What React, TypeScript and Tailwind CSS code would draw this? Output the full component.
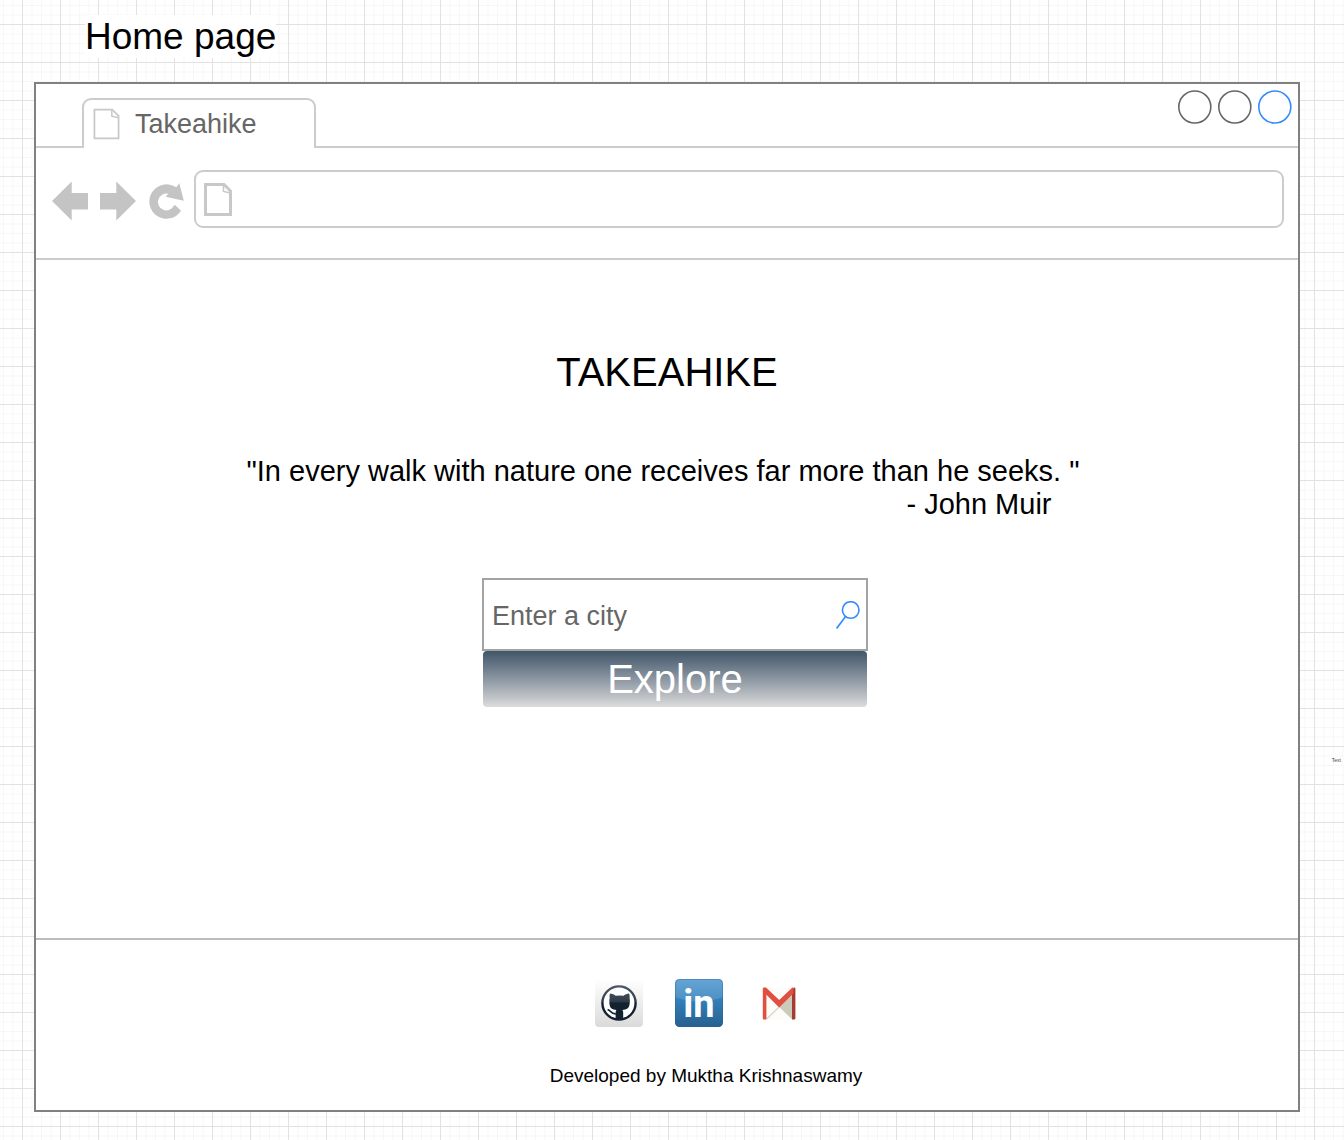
import React from "react";

function DocIcon({ className, weight }: { className: string; weight: number }) {
  return (
    <svg className={className} viewBox="0 0 28 33" fill="none" stroke="#c8c8c8" strokeWidth={weight} aria-hidden="true">
      <path d="M1.5 1.5H20L26.5 8V31.5H1.5Z" />
      <path d="M19.5 1.5V8.5L26.5 10" strokeWidth="1.5" />
    </svg>
  );
}

function WindowButton({ label, color }: { label: string; color: string }) {
  return (
    <button type="button" aria-label={label} className="size-[34px]">
      <svg viewBox="0 0 34 34" className="size-full" fill="none" stroke={color} strokeWidth="1.6">
        <circle cx="16.8" cy="17" r="16" />
      </svg>
    </button>
  );
}

function BackIcon() {
  return (
    <svg className="h-10 w-9" viewBox="0 0 36 40" fill="#c4c4c4" aria-hidden="true">
      <path d="M0 20L19.7 0.5V12H36V28.5H19.7V39.5Z" />
    </svg>
  );
}

function ForwardIcon() {
  return (
    <svg className="h-10 w-9" viewBox="0 0 36 40" fill="#c4c4c4" aria-hidden="true">
      <path d="M36 20L16.3 0.5V12H0V28.5H16.3V39.5Z" />
    </svg>
  );
}

function ReloadIcon() {
  return (
    <svg className="h-10 w-9" viewBox="0 0 36 40" fill="#c4c4c4" aria-hidden="true">
      <path d="M28.2 6.3L31.3 2.3L35.8 19.7L17.7 15.7L20.3 12.8A8.4 8.4 0 1 0 26 24.6L27 24L33 29.8A17.2 17.2 0 1 1 28.2 6.3Z" />
    </svg>
  );
}

function SearchIcon() {
  return (
    <svg className="mt-px h-7 w-6" viewBox="0 0 24 28" fill="none" stroke="#338cff" strokeWidth="1.6" aria-hidden="true">
      <circle cx="14.7" cy="9" r="8.3" />
      <path d="M9.6 15.6L0.6 27.4" />
    </svg>
  );
}

function GithubLogo() {
  return (
    <svg className="size-12" viewBox="0 0 48 48" aria-hidden="true">
      <defs>
        <linearGradient id="ghTile" x1="0" y1="0" x2="0" y2="1">
          <stop offset="0" stopColor="#ffffff" />
          <stop offset="1" stopColor="#dadada" />
        </linearGradient>
        <linearGradient id="ghInk" x1="0" y1="0" x2="0" y2="48" gradientUnits="userSpaceOnUse">
          <stop offset="0.15" stopColor="#4a5763" />
          <stop offset="0.47" stopColor="#2f3c49" />
          <stop offset="0.5" stopColor="#142230" />
          <stop offset="1" stopColor="#142230" />
        </linearGradient>
      </defs>
      <rect width="48" height="48" rx="4" fill="url(#ghTile)" />
      <circle cx="24" cy="24" r="16.6" fill="#fff" stroke="url(#ghInk)" strokeWidth="2.4" />
      <path
        fill="url(#ghInk)"
        d="M15.1 14.6C17.2 14.6 19 15.6 20.6 16.8Q24.5 16.1 28.6 16.8C30.2 15.6 32 14.6 34.1 14.6Q35 17.2 34.5 19C35 20.6 35 22.4 34.6 25C34 29.4 31.9 30.6 27.4 31Q28.2 32 28.2 33.6V40H20.6V33.6Q20.6 32 21.4 31C17 30.6 15 29.4 14.5 25C14.2 22.4 14.2 20.6 14.7 19Q14.2 17.2 15.1 14.6Z"
      />
      <path d="M12.6 30.6C16 31 15.6 35.2 20.8 34.8" fill="none" stroke="#142230" strokeWidth="1.7" />
    </svg>
  );
}

function LinkedinLogo() {
  return (
    <svg className="size-12" viewBox="0 0 48 48" aria-hidden="true">
      <defs>
        <linearGradient id="liTile" x1="0" y1="0" x2="0" y2="1">
          <stop offset="0" stopColor="#4f98d0" />
          <stop offset="0.45" stopColor="#327fb9" />
          <stop offset="1" stopColor="#27608f" />
        </linearGradient>
        <clipPath id="liClip">
          <rect width="48" height="48" rx="4.5" />
        </clipPath>
      </defs>
      <g clipPath="url(#liClip)">
        <rect width="48" height="48" fill="url(#liTile)" />
        <path d="M0 0H48V18Q24 27 0 18Z" fill="#ffffff" fillOpacity="0.13" />
      </g>
      <rect x="0.5" y="0.5" width="47" height="47" rx="4" fill="none" stroke="#275f92" strokeOpacity="0.35" />
      <text x="24" y="38" textAnchor="middle" fill="#fff" fontFamily="Roboto, sans-serif" fontWeight="700" fontSize="38">
        in
      </text>
    </svg>
  );
}

function GmailLogo() {
  return (
    <svg className="size-12" viewBox="0 0 48 48" aria-hidden="true">
      <path d="M8 8.5H40V40.5H8Z" fill="#fdfcf8" />
      <path d="M24.2 28L37.2 15.5V40.5Z" fill="#cbcabb" />
      <path d="M11.5 40L24.2 28" stroke="#d5d4c8" strokeWidth="1.2" />
      <path d="M37 11V40.5H39.2Q40.4 40.5 40.4 39.4V9.6Q40.4 8.5 39.2 8.5Z" fill="#a33c31" />
      <path d="M9 8.5H11L24.2 21L37.4 8.5H38.4V14.4L24.2 28.6L11.4 15.8V40.5H9Q7.8 40.5 7.8 39.4V9.6Q7.8 8.5 9 8.5Z" fill="#e04f40" />
    </svg>
  );
}

export default function App() {
  return (
    <div className="relative min-h-screen bg-white bg-[linear-gradient(to_right,#e2e2e2_1px,transparent_1px),linear-gradient(to_bottom,#e2e2e2_1px,transparent_1px),linear-gradient(to_right,#f7f7f7_1px,transparent_1px),linear-gradient(to_bottom,#f7f7f7_1px,transparent_1px)] bg-[size:38px_38px,38px_38px,9.5px_9.5px,9.5px_9.5px] bg-[position:22px_24px] pb-7 pl-[34px] pr-11 pt-[15px] font-['Liberation_Sans',Arial,sans-serif] text-black">
      <h1 className="mb-6 ml-[51px] w-fit bg-white text-[37px] leading-[43px]">Home page</h1>

      <div className="border-2 border-[#808080] bg-white">
        <header>
          <div className="flex h-16 items-stretch">
            <div className="w-[46px] border-b-2 border-[#cccccc]" />
            <div className="mt-[14px] flex w-[234px] items-center rounded-t-[9px] border-2 border-b-0 border-[#cccccc] pl-[9px] text-[27px] text-[#666666]">
              <DocIcon className="h-8 w-[27px]" weight={1.8} />
              <span className="ml-[15px]">Takeahike</span>
            </div>
            <div className="flex flex-1 justify-end gap-[6px] border-b-2 border-[#cccccc] pr-[6px] pt-[6px]">
              <WindowButton label="Minimize" color="#666666" />
              <WindowButton label="Maximize" color="#666666" />
              <WindowButton label="Close" color="#338cff" />
            </div>
          </div>

          <div className="flex h-28 items-start border-b-2 border-[#cccccc] pl-4 pr-[14px] pt-[22px]">
            <div className="mr-[10px] flex gap-3 pt-[11px]">
              <button type="button" aria-label="Back"><BackIcon /></button>
              <button type="button" aria-label="Forward"><ForwardIcon /></button>
              <button type="button" aria-label="Reload"><ReloadIcon /></button>
            </div>
            <label className="flex h-[58px] flex-1 items-center rounded-[9px] border-2 border-[#cccccc] pl-2">
              <DocIcon className="h-[33px] w-7" weight={3} />
              <input type="text" aria-label="Address" className="ml-3 min-w-0 flex-1 text-[27px] text-[#666666] outline-none" />
            </label>
          </div>
        </header>

        <main className="flex flex-col items-center pb-[231px] pt-[88px]">
          <h2 className="text-[40px] leading-12">TAKEAHIKE</h2>
          <blockquote className="mt-[59px] pr-2 text-[29px] leading-[33px]">
            <p>"In every walk with nature one receives far more than he seeks. "</p>
            <footer className="pr-7 text-right">- John Muir</footer>
          </blockquote>
          <form className="mt-[57px] flex flex-col items-center pl-4" onSubmit={(e) => e.preventDefault()}>
            <label className="flex h-[73px] w-[386px] items-center border-2 border-[#a3a3a3] pl-2 pr-[6px]">
              <input
                type="text"
                aria-label="City"
                placeholder="Enter a city"
                className="min-w-0 flex-1 pt-1 text-[27px] text-[#666666] outline-none placeholder:text-[#666666]"
              />
              <SearchIcon />
            </label>
            <button
              type="submit"
              className="h-14 w-96 rounded-[4px] bg-linear-to-b from-[#42566a] to-[#dcdcdc] text-[40px] leading-14 text-white"
            >
              Explore
            </button>
          </form>
        </main>

        <footer className="flex flex-col items-center border-t-2 border-[#bdbdbd] pb-[22px] pt-[39px]">
          <nav className="flex gap-8 pl-16" aria-label="Contact">
            <a href="#github" aria-label="GitHub"><GithubLogo /></a>
            <a href="#linkedin" aria-label="LinkedIn"><LinkedinLogo /></a>
            <a href="#gmail" aria-label="Gmail"><GmailLogo /></a>
          </nav>
          <p className="mt-[37px] pl-[78px] text-[19px] leading-6">Developed by Muktha Krishnaswamy</p>
        </footer>
      </div>

      <span className="absolute right-[3px] top-[757px] text-[5px] leading-[6px] text-[#444444]">Text</span>
    </div>
  );
}
